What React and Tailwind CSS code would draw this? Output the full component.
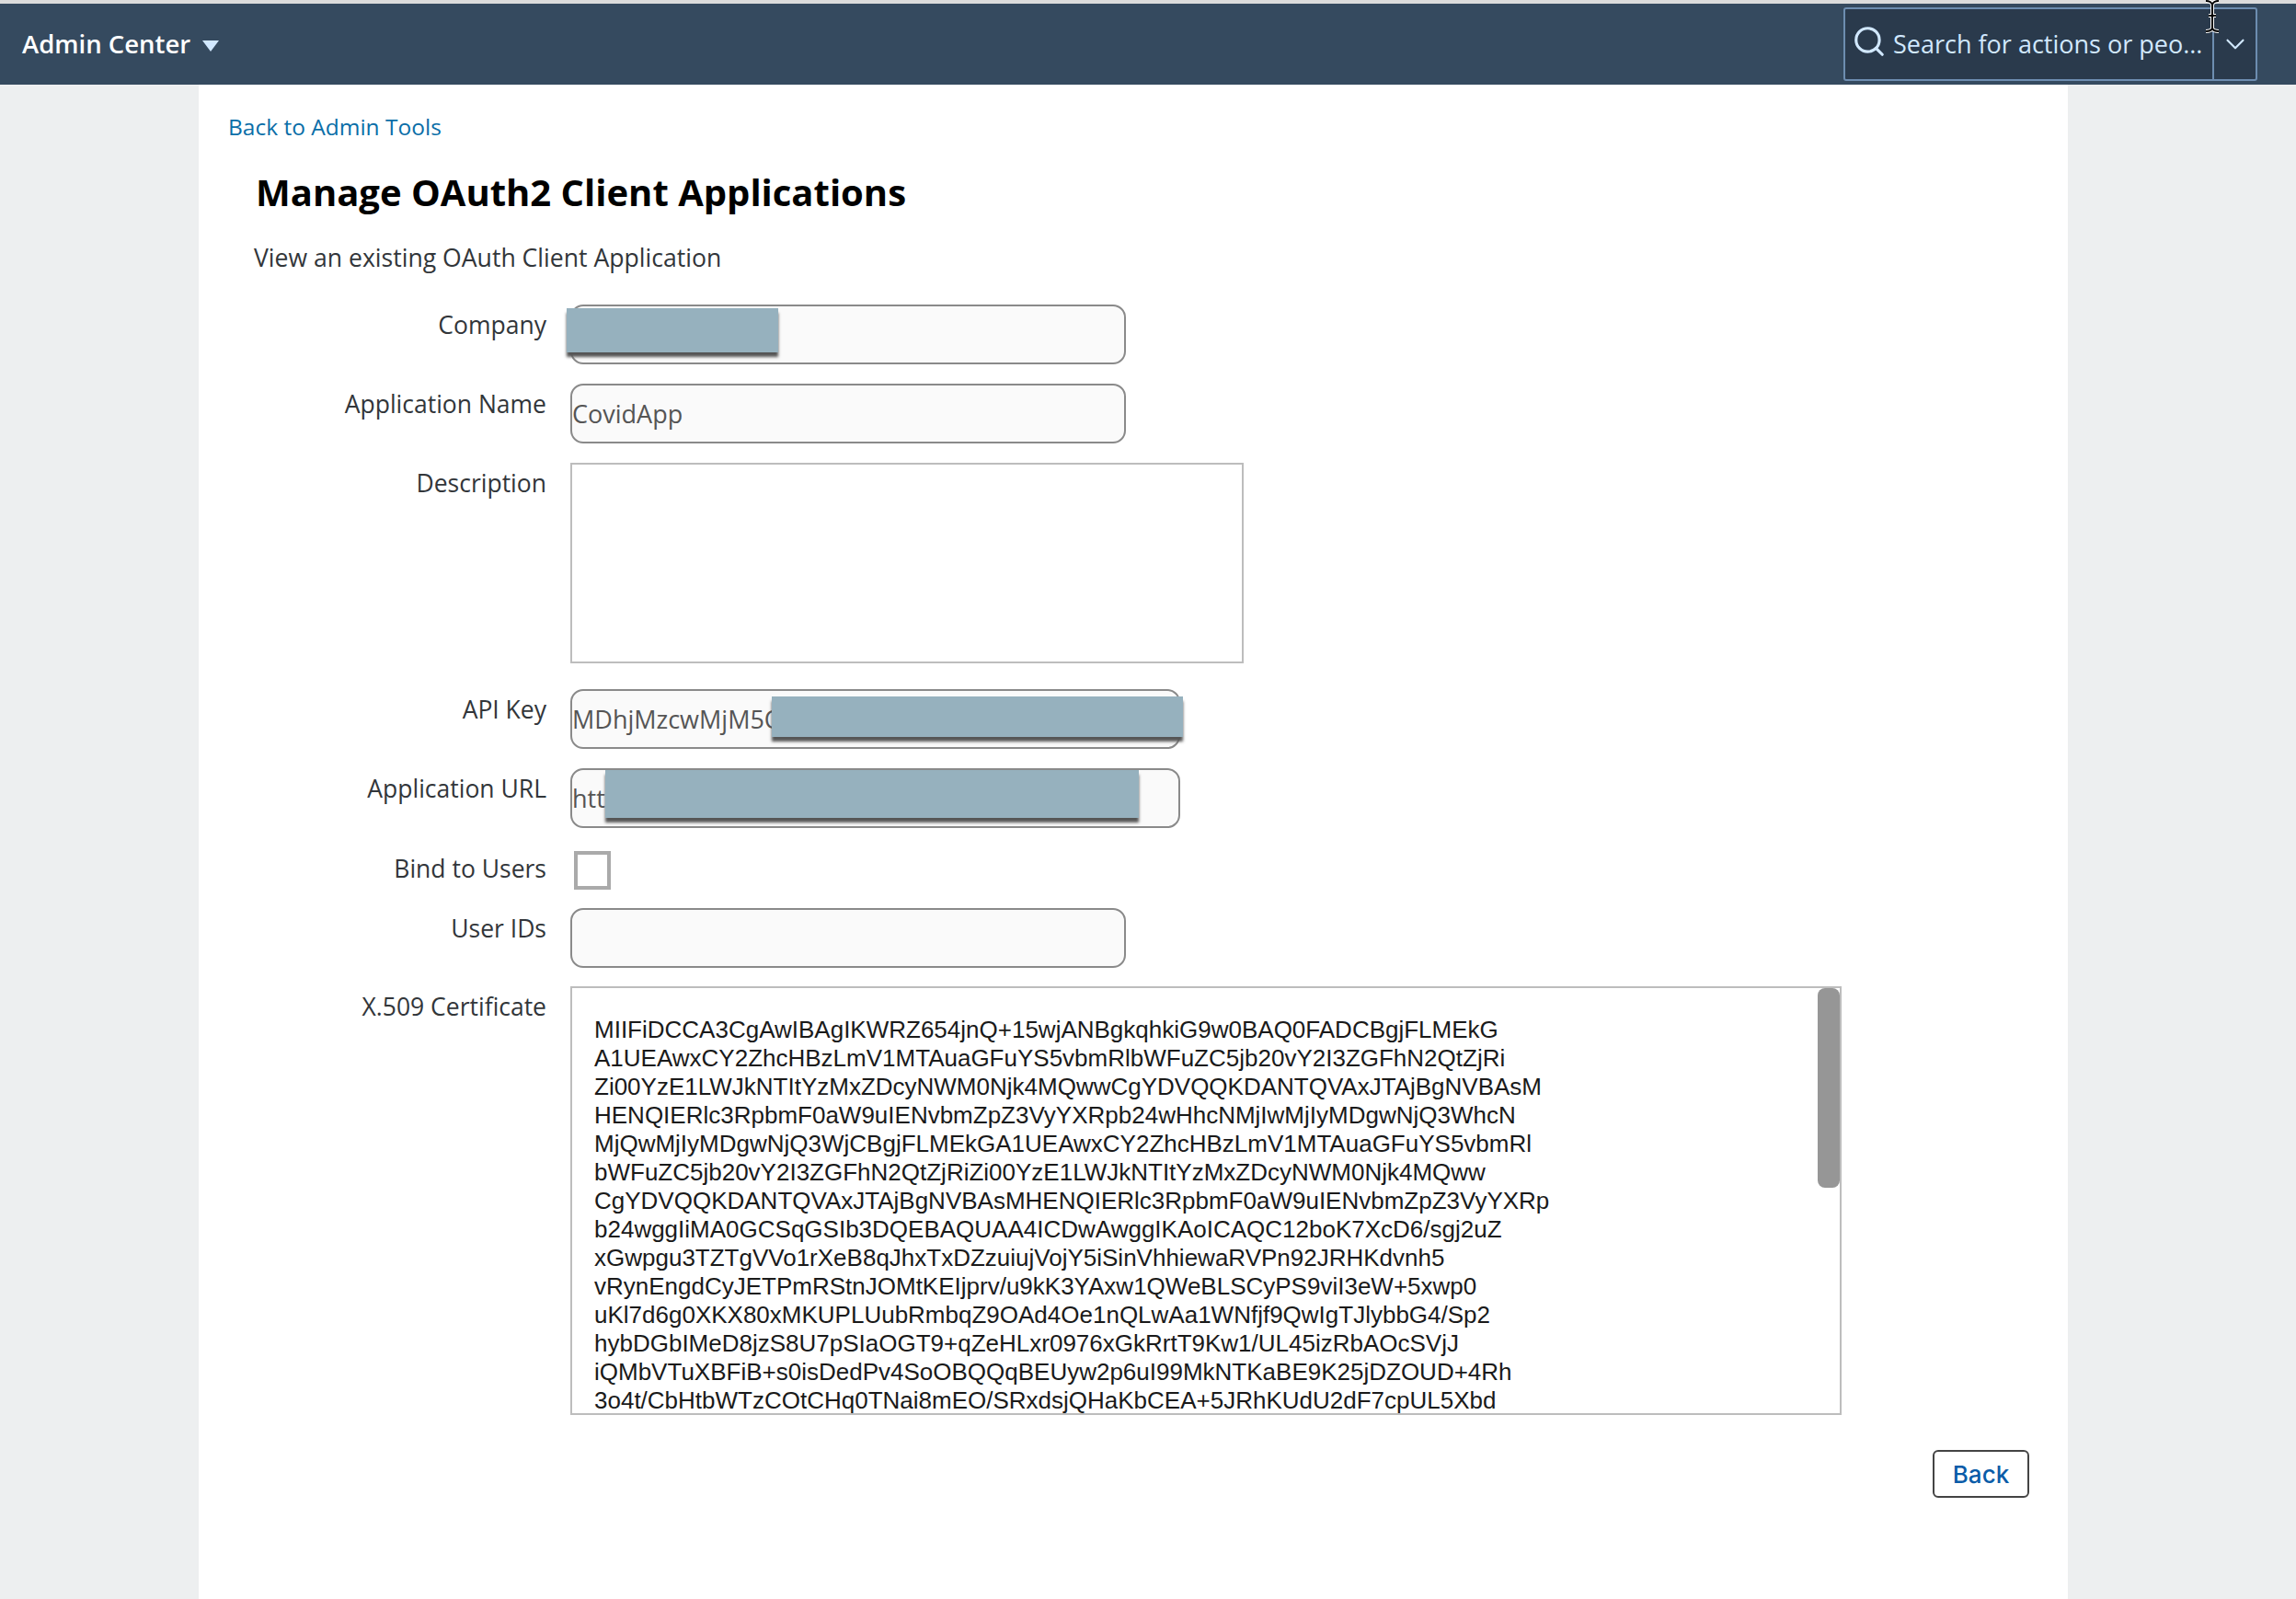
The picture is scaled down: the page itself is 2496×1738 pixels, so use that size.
import React from 'react';
import { Search, ChevronDown } from 'lucide-react';

const certLines = [
    'MIIFiDCCA3CgAwIBAgIKWRZ654jnQ+15wjANBgkqhkiG9w0BAQ0FADCBgjFLMEkG',
    'A1UEAwxCY2ZhcHBzLmV1MTAuaGFuYS5vbmRlbWFuZC5jb20vY2I3ZGFhN2QtZjRi',
    'Zi00YzE1LWJkNTItYzMxZDcyNWM0Njk4MQwwCgYDVQQKDANTQVAxJTAjBgNVBAsM',
    'HENQIERlc3RpbmF0aW9uIENvbmZpZ3VyYXRpb24wHhcNMjIwMjIyMDgwNjQ3WhcN',
    'MjQwMjIyMDgwNjQ3WjCBgjFLMEkGA1UEAwxCY2ZhcHBzLmV1MTAuaGFuYS5vbmRl',
    'bWFuZC5jb20vY2I3ZGFhN2QtZjRiZi00YzE1LWJkNTItYzMxZDcyNWM0Njk4MQww',
    'CgYDVQQKDANTQVAxJTAjBgNVBAsMHENQIERlc3RpbmF0aW9uIENvbmZpZ3VyYXRp',
    'b24wggIiMA0GCSqGSIb3DQEBAQUAA4ICDwAwggIKAoICAQC12boK7XcD6/sgj2uZ',
    'xGwpgu3TZTgVVo1rXeB8qJhxTxDZzuiujVojY5iSinVhhiewaRVPn92JRHKdvnh5',
    'vRynEngdCyJETPmRStnJOMtKEIjprv/u9kK3YAxw1QWeBLSCyPS9viI3eW+5xwp0',
    'uKl7d6g0XKX80xMKUPLUubRmbqZ9OAd4Oe1nQLwAa1WNfjf9QwIgTJlybbG4/Sp2',
    'hybDGbIMeD8jzS8U7pSIaOGT9+qZeHLxr0976xGkRrtT9Kw1/UL45izRbAOcSVjJ',
    'iQMbVTuXBFiB+s0isDedPv4SoOBQQqBEUyw2p6uI99MkNTKaBE9K25jDZOUD+4Rh',
    '3o4t/CbHtbWTzCOtCHq0TNai8mEO/SRxdsjQHaKbCEA+5JRhKUdU2dF7cpUL5Xbd',
];

const Row = ({ label, className, labelClass = 'pt-[4px]', children }) => (
    <div className={`flex items-start ${className}`}>
        <div className={`w-[378px] shrink-0 text-right text-[26.5px] leading-[36px] text-[#32363a] ${labelClass}`}>{label}</div>
        <div className="ml-[26px]">{children}</div>
    </div>
);

const Field = ({ width = 'w-[604px]', value, children }) => (
    <div className={`relative flex h-[65px] items-center overflow-visible rounded-[14px] border-2 border-[#8a8a8a] bg-[#fafafa] ${width}`}>
        <span className="truncate pt-[2px] text-[27px] text-[#555555]">{value}</span>
        {children}
    </div>
);

const Redact = ({ className }) => (
    <div className={`absolute bg-[#96b1be] shadow-[0_5px_3px_#555555] ${className}`} />
);

const App = () => {
    return (
        <div className="relative flex min-h-[1738px] flex-col bg-[#edeff0] font-['Open_Sans',sans-serif]">
            <div className="h-[4px] bg-[#dcdcdc]" />
            <header className="flex h-[88px] items-center justify-between bg-[#354a5f] pl-[24px] pr-[42px]">
                <div className="flex items-center">
                    <span className="text-[27.5px] font-semibold text-white">Admin Center</span>
                    <span className="ml-[13px] mt-[3px] h-0 w-0 border-x-[9px] border-t-[12px] border-x-transparent border-t-[#d1e8ff]" />
                </div>
                <div className="flex h-[80px] w-[450px] rounded-[3px] border-2 border-[#6d8db0] bg-[#2a3a4c] text-[#d1e8ff]">
                    <div className="flex w-[401px] items-center border-r-2 border-[#6d8db0] pl-[7px]">
                        <Search size={38} strokeWidth={2} className="-mt-[6px]" />
                        <span className="ml-[7px] text-[27px]">Search for actions or peo...</span>
                    </div>
                    <div className="flex flex-1 items-center justify-center">
                        <ChevronDown size={34} strokeWidth={1.5} />
                    </div>
                </div>
            </header>

            <main className="ml-[216px] flex w-[2032px] flex-1 flex-col bg-white pl-[32px] pr-[42px]">
                <a className="mt-[28px] text-[24.5px] leading-[36px] text-[#0a6ea8]">Back to Admin Tools</a>
                <h1 className="ml-[30px] mt-[25px] text-[40px] font-bold leading-[56px] text-black">Manage OAuth2 Client Applications</h1>
                <p className="ml-[28px] mt-[25px] text-[26.6px] leading-[36px] text-[#32363a]">View an existing OAuth Client Application</p>

                <Row label="Company" className="-ml-[32px] mt-[33px]">
                    <Field>
                        <Redact className="-left-[6px] top-[2px] h-[48px] w-[230px]" />
                    </Field>
                </Row>
                <Row label="Application Name" className="-ml-[32px] mt-[21px]">
                    <Field value="CovidApp" />
                </Row>
                <Row label="Description" className="-ml-[32px] mt-[21px]">
                    <div className="h-[218px] w-[732px] border-2 border-[#bdbdbd]" />
                </Row>
                <Row label="API Key" className="-ml-[32px] mt-[28px]">
                    <Field width="w-[663px]" value="MDhjMzcwMjM5Q">
                        <Redact className="left-[217px] top-[6px] h-[44px] w-[447px]" />
                    </Field>
                </Row>
                <Row label="Application URL" className="-ml-[32px] mt-[21px]">
                    <Field width="w-[663px]" value="https">
                        <Redact className="left-[36px] top-0 h-[52px] w-[580px]" />
                    </Field>
                </Row>
                <Row label="Bind to Users" labelClass="pt-[1px]" className="-ml-[32px] mt-[25px]">
                    <div className="ml-[4px] h-[42px] w-[40px] border-4 border-[#aaaaaa]" />
                </Row>
                <Row label="User IDs" className="-ml-[32px] mt-[20px]">
                    <Field />
                </Row>
                <Row label="X.509 Certificate" className="-ml-[32px] mt-[20px]">
                    <div className="relative h-[466px] w-[1382px] overflow-hidden border-2 border-[#bdbdbd] pl-[24px] pt-[30px] font-['Liberation_Sans',sans-serif] text-[26px] leading-[31px] text-[#1a1a1a]">
                        {certLines.map((line) => (
                            <div key={line} className="whitespace-nowrap">{line}</div>
                        ))}
                        <div className="absolute right-0 top-0 h-[217px] w-[24px] rounded-[8px] bg-[#969696]" />
                    </div>
                </Row>

                <div className="mt-[38px] flex justify-end">
                    <button className="h-[52px] w-[105px] rounded-[6px] border-2 border-[#444444] bg-white font-['Inter',sans-serif] text-[26px] font-medium text-[#0a5ca8]">Back</button>
                </div>
            </main>

            {/* text cursor caught in the screenshot */}
            <svg className="absolute left-[2395px] top-0" width="20" height="36" viewBox="0 0 20 36" fill="none">
                <path d="M3 1c3 0 6 1 7 4 1-3 4-4 7-4M10 5v26M3 34c3 0 6-1 7-3 1 2 4 3 7 3M6 17h8" stroke="white" strokeWidth="4" />
                <path d="M3 1c3 0 6 1 7 4 1-3 4-4 7-4M10 5v26M3 34c3 0 6-1 7-3 1 2 4 3 7 3M6 17h8" stroke="black" strokeWidth="2" />
            </svg>
        </div>
    );
};

export default App;
